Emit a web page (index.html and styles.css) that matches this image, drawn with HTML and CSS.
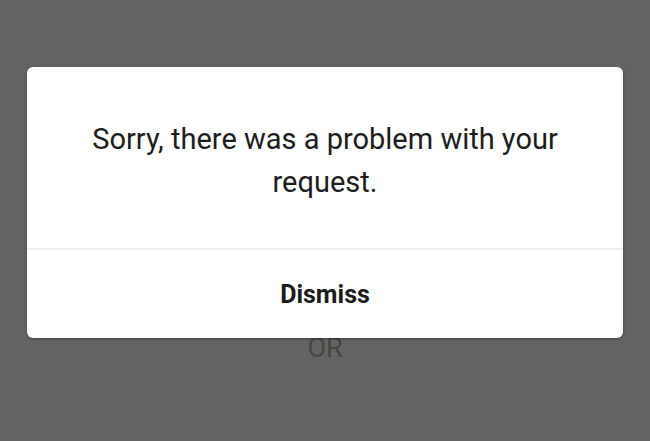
FILE: index.html
```html
<!DOCTYPE html>
<html lang="en">
<head>
    <meta charset="UTF-8">
    <meta name="viewport" content="width=device-width, initial-scale=1.0">
    <title>Error</title>
    <link rel="stylesheet" href="styles.css">
</head>
<body>
    <div class="page">
        <p class="or-text">OR</p>
    </div>

    <!-- Error dialog -->
    <div class="dialog">
        <div class="dialog-message">
            <p>Sorry, there was a problem with your request.</p>
        </div>
        <button class="dialog-button">Dismiss</button>
    </div>
</body>
</html>
```

FILE: styles.css
```css
* {
    box-sizing: border-box;
    margin: 0;
    padding: 0;
    font-family: 'Roboto', 'Liberation Sans', sans-serif;
}

body {
    background-color: #656462;
    width: 650px;
    height: 441px;
    overflow: hidden;
    position: relative;
}

.page {
    padding-top: 333px;
    text-align: center;
}

.or-text {
    font-size: 27px;
    color: #464544;
    line-height: 30px;
}

.dialog {
    position: absolute;
    top: 67px;
    left: 27px;
    width: 596px;
    height: 271px;
    background-color: #fff;
    border-radius: 6px;
    box-shadow: 0 1px 3px rgba(0, 0, 0, 0.35);
    display: flex;
    flex-direction: column;
}

.dialog-message {
    height: 183px;
    padding: 51px 50px 0;
    border-bottom: 2px solid #efefef;
    text-align: center;
}

.dialog-message p {
    font-size: 29px;
    line-height: 43px;
    color: #1c1c1c;
}

.dialog-button {
    flex: 1;
    background: none;
    border: none;
    font-size: 25px;
    font-weight: bold;
    color: #1a1a1a;
    padding-bottom: 0;
    cursor: pointer;
}
```
